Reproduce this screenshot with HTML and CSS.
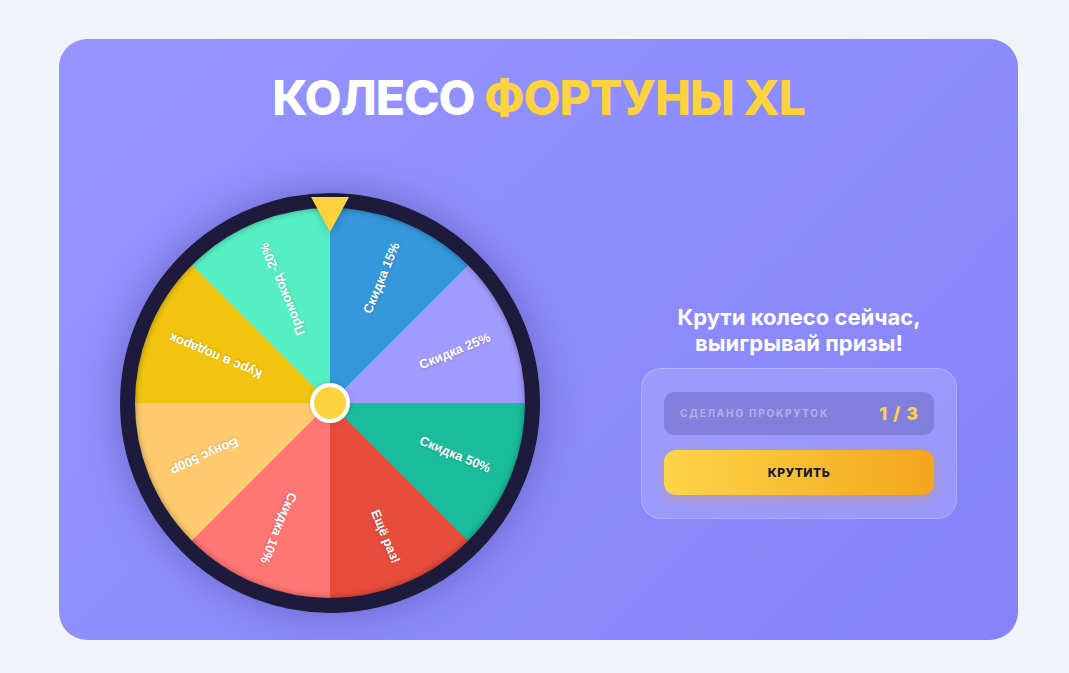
FILE: index.html
```html
<!DOCTYPE html>
<html>
<head>
    <title>Колесо фортуны XL</title>
    <meta charset="utf-8">
    <link rel="stylesheet" href="styles.css">
</head>
<body>
<div class="card">
    <h1 class="title">КОЛЕСО <span>ФОРТУНЫ XL</span></h1>
    <div class="row">
        <div class="wheel-wrap">
            <div class="pointer"></div>
            <div class="wheel">
                <div class="label" style="transform: rotate(-67.5deg)">Скидка 15%</div>
                <div class="label" style="transform: rotate(-22.5deg)">Скидка 25%</div>
                <div class="label" style="transform: rotate(22.5deg)">Скидка 50%</div>
                <div class="label" style="transform: rotate(67.5deg)">Ещё раз!</div>
                <div class="label" style="transform: rotate(112.5deg)">Скидка 10%</div>
                <div class="label" style="transform: rotate(157.5deg)">Бонус 500Р</div>
                <div class="label" style="transform: rotate(202.5deg)">Курс в подарок</div>
                <div class="label" style="transform: rotate(247.5deg)">Промокод -20%</div>
                <div class="hub"></div>
            </div>
        </div>
        <div class="side">
            <h2 class="side-title">Крути колесо сейчас,<br>выигрывай призы!</h2>
            <div class="panel">
                <div class="counter">
                    <span class="counter-label">Сделано прокруток</span>
                    <span class="counter-value">1 / 3</span>
                </div>
                <button type="button" class="spin">Крутить</button>
            </div>
        </div>
    </div>
</div>
</body>
</html>
```

FILE: styles.css
```css
body {
    margin: 0;
    background: #f0f3f8;
    font-family: Inter, "Noto Sans", sans-serif;
}

.card {
    box-sizing: border-box;
    width: 959px;
    height: 601px;
    margin: 39px 0 0 59px;
    padding-top: 29px;
    border-radius: 28px;
    background: linear-gradient(135deg, #9695ff 0%, #8d8cfd 50%, #8683f9 100%);
}

.title {
    margin: 0;
    font-size: 48px;
    line-height: 60px;
    font-weight: 800;
    text-align: center;
    color: #fff;
    letter-spacing: -1px;
}

.title span {
    color: #fdd23f;
}

.row {
    display: flex;
    justify-content: space-between;
    align-items: center;
    margin-top: 65px;
    padding: 0 61px;
}

.wheel-wrap {
    position: relative;
    width: 420px;
    height: 420px;
}

.wheel {
    position: relative;
    box-sizing: border-box;
    width: 420px;
    height: 420px;
    border: 15px solid #1e1a3b;
    border-radius: 50%;
    background: conic-gradient(
        #3498db 0deg 45deg,
        #a29bfe 45deg 90deg,
        #1abc9c 90deg 135deg,
        #e74c3c 135deg 180deg,
        #ff7675 180deg 225deg,
        #fdcb6e 225deg 270deg,
        #f1c40f 270deg 315deg,
        #55efc4 315deg 360deg
    );
    box-shadow: 0 0 40px rgba(35, 30, 90, 0.35), inset 0 0 6px rgba(0, 0, 0, 0.35);
}

.label {
    position: absolute;
    left: 50%;
    top: 50%;
    box-sizing: border-box;
    width: 195px;
    height: 20px;
    margin-top: -10px;
    padding-right: 22px;
    transform-origin: 0 50%;
    text-align: right;
    font-family: "Liberation Sans", Arial, sans-serif;
    font-size: 13px;
    font-weight: bold;
    line-height: 20px;
    color: #fff;
    white-space: nowrap;
    text-shadow: 0 1px 2px rgba(0, 0, 0, 0.2);
}

.hub {
    position: absolute;
    left: 50%;
    top: 50%;
    box-sizing: border-box;
    width: 40px;
    height: 40px;
    margin: -20px 0 0 -20px;
    border: 4px solid #fff;
    border-radius: 50%;
    background: #fdd23f;
    box-shadow: 0 0 6px rgba(0, 0, 0, 0.15);
}

.pointer {
    position: absolute;
    left: 50%;
    top: 4px;
    z-index: 2;
    width: 0;
    height: 0;
    margin-left: -19px;
    border-left: 19px solid transparent;
    border-right: 19px solid transparent;
    border-top: 35px solid #fdd23f;
    filter: drop-shadow(0 2px 4px rgba(0, 0, 0, 0.2));
}

.side {
    width: 316px;
    padding-top: 16px;
}

.side-title {
    margin: 0 0 12px;
    font-size: 22px;
    line-height: 26px;
    font-weight: 700;
    text-align: center;
    color: #fff;
}

.panel {
    box-sizing: border-box;
    padding: 23px 22px;
    border: 1px solid rgba(255, 255, 255, 0.2);
    border-radius: 20px;
    background: rgba(255, 255, 255, 0.15);
}

.counter {
    display: flex;
    justify-content: space-between;
    align-items: center;
    height: 43px;
    padding: 0 15px 0 16px;
    border-radius: 10px;
    background: rgba(40, 35, 110, 0.22);
}

.counter-label {
    font-size: 10px;
    font-weight: 700;
    letter-spacing: 1.8px;
    text-transform: uppercase;
    color: rgba(255, 255, 255, 0.4);
}

.counter-value {
    font-size: 18px;
    font-weight: 800;
    letter-spacing: 1px;
    color: #fdd23f;
}

.spin {
    display: block;
    width: 100%;
    height: 45px;
    margin-top: 15px;
    border: none;
    border-radius: 12px;
    background: linear-gradient(90deg, #fdd54a 0%, #f3a51c 100%);
    box-shadow: 0 4px 14px rgba(243, 156, 18, 0.3);
    font-family: Inter, "Noto Sans", sans-serif;
    font-size: 12px;
    font-weight: 800;
    letter-spacing: 0.5px;
    text-transform: uppercase;
    color: #1a1830;
}
```
